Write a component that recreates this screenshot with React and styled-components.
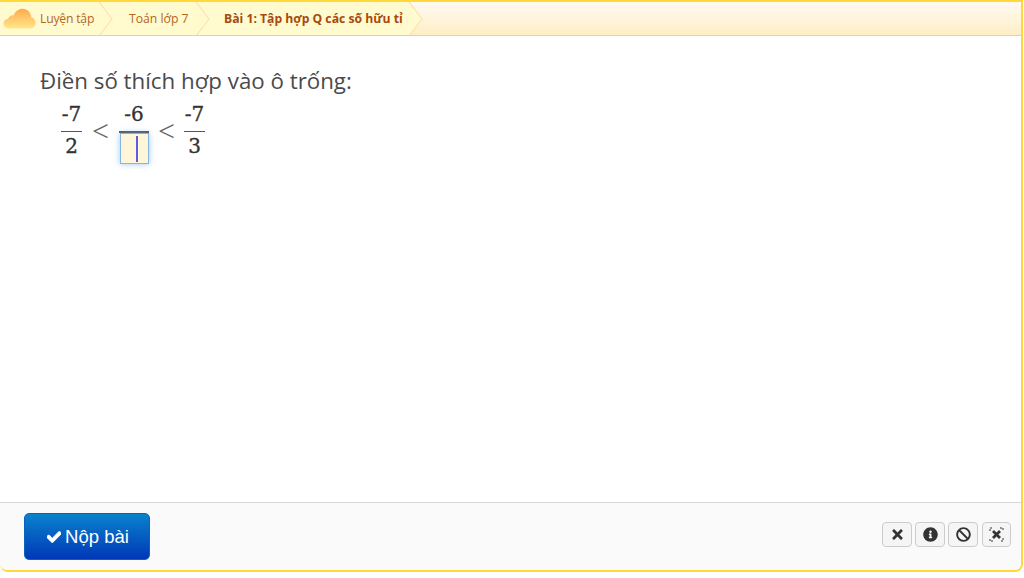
import React from 'react';
import styled, { createGlobalStyle } from 'styled-components';
import { FaCheck, FaTimes, FaInfoCircle, FaBan } from 'react-icons/fa';

const GlobalStyle = createGlobalStyle`
html, body { margin: 0; padding: 0; background: #fff; }
body { font-family: "Open Sans", "Noto Sans", sans-serif; }
`;

const Frame = styled.div`
box-sizing: border-box;
width: 1023px;
height: 572px;
border-style: solid;
border-color: #ffd83a;
border-width: 2px 2px 2px 0;
border-radius: 0 0 8px 8px;
display: flex;
flex-direction: column;
overflow: hidden;
`;

const Crumbs = styled.div`
flex: 0 0 33px;
display: flex;
align-items: stretch;
background: linear-gradient(to bottom, #fffaf0, #fff4d8 60%, #fdeec4);
border-bottom: 1px solid #ffd83a;
overflow: hidden;
`;

const Crumb = styled.div`
position: relative;
display: flex;
align-items: center;
gap: 5px;
width: ${props => props.width}px;
box-sizing: border-box;
padding-left: ${props => props.pad}px;
background: #fffbcf;
font-size: 12.2px;
font-weight: ${props => (props.active ? 700 : 400)};
color: ${props => (props.active ? '#a8490f' : '#b5651d')};
white-space: nowrap;
z-index: ${props => props.layer};

&::after {
  content: '';
  position: absolute;
  top: 5px;
  right: -12px;
  width: 23px;
  height: 23px;
  background: #fffbcf;
  border-top: 1px solid #fddcb0;
  border-right: 1px solid #fddcb0;
  transform: rotate(45deg) skew(8deg, 8deg);
}
`;

const CrumbLabel = styled.span`
position: relative;
z-index: 1;
letter-spacing: ${props => props.spacing || 0}px;
`;

const Cloud = styled.svg`
width: 33px;
height: 21px;
flex: none;
margin-right: -1px;
`;

const Content = styled.div`
flex: 1;
padding: 30px 0 0 40px;
background: #fff;
`;

const Question = styled.div`
font-size: 22.3px;
line-height: 30px;
color: #4a4a4a;
`;

const MathRow = styled.div`
display: flex;
align-items: flex-start;
margin: 6px 0 0 21px;
font-family: "DejaVu Serif", serif;
color: #333;
`;

const Fraction = styled.div`
display: flex;
flex-direction: column;
align-items: center;
width: ${props => props.width}px;
`;

const Top = styled.div`
height: 29px;
line-height: 25px;
font-size: 20px;
-webkit-text-stroke: 0.35px #333;
`;

const Bottom = styled(Top)`
height: 30px;
line-height: 28px;
align-self: stretch;
text-align: center;
border-top: 1.5px solid #555;
`;

const Less = styled.div`
width: ${props => props.width}px;
text-align: center;
font-family: "Liberation Serif", serif;
font-size: 30px;
line-height: 30px;
margin-top: 14px;
color: #666;
`;

const AnswerCol = styled.div`
display: flex;
flex-direction: column;
align-items: center;
width: 30px;
`;

const AnswerRule = styled.div`
align-self: stretch;
height: 2px;
background: #555;
`;

const AnswerBox = styled.div`
box-sizing: border-box;
width: 29px;
height: 31px;
display: flex;
align-items: center;
justify-content: center;
background: #fff5d8;
border: 1px solid #80b6e4;
box-shadow: 0 0 6px rgba(90, 160, 235, 0.6);
`;

const Caret = styled.div`
width: 2px;
height: 26px;
margin-left: 6px;
background: #5d5fe0;
`;

const Footer = styled.div`
flex: 0 0 67px;
display: flex;
align-items: center;
justify-content: space-between;
padding: 0 10px 0 24px;
background: #fafafa;
border-top: 1px solid #d8d8d8;
`;

const Submit = styled.button`
width: 126px;
height: 47px;
display: flex;
align-items: center;
justify-content: center;
gap: 4px;
padding: 0 0 0 2px;
border: 1px solid #0a62bd;
border-radius: 5px;
background: linear-gradient(to bottom, #0a82cc, #0038b8);
color: #fff;
font-family: "Liberation Sans", Arial, sans-serif;
font-size: 18.5px;
`;

const CheckIcon = styled(FaCheck)`
stroke: #fff;
stroke-width: 40;
`;

const Tools = styled.div`
display: flex;
gap: 3px;
margin-top: -5px;
`;

const ToolButton = styled.button`
width: ${props => props.width || 30}px;
margin-left: ${props => props.shift || 0}px;
height: 25px;
display: flex;
align-items: center;
justify-content: center;
padding: 0;
border: 1px solid #ccc;
border-radius: 4px;
background: #f5f5f5;
color: #333;
font-size: 15px;
`;

function ExpandIcon() {
  return (
    <svg width="15" height="15" viewBox="0 0 15 15" fill="none" stroke="#333">
      <path d="M1 4V1h3M11 1h3v3M14 11v3h-3M4 14H1v-3" strokeDasharray="2 1" />
      <path d="M4 4l7 7M11 4l-7 7" strokeWidth="2.8" />
    </svg>
  );
}

export default function App() {
  return (
    <Frame>
      <GlobalStyle />
      <Crumbs>
        <Crumb width={98} pad={3} layer={3}>
          <Cloud viewBox="0 0 33 21">
            <defs>
              <linearGradient id="cloudFill" x1="0" y1="0" x2="0" y2="1">
                <stop offset="0" stopColor="#ffa94f" />
                <stop offset="1" stopColor="#ffe88a" />
              </linearGradient>
            </defs>
            <path
              d="M6 20.5C2.500 20.500.500 18.300.500 15.600c0-2.600 2-4.600 4.600-4.800C6.200 8.300 8.400 7 10.500 7.400 12.300 3.300 15.600.800 19.600.800c5 0 8.400 3.700 8.600 8.400 2.700.6 4.300 3 4.300 5.700 0 3.200-2.300 5.600-5.600 5.600Z"
              fill="url(#cloudFill)"
            />
          </Cloud>
          <CrumbLabel spacing={-0.2}>Luyện tập</CrumbLabel>
        </Crumb>
        <Crumb width={97} pad={31} layer={2}>
          <CrumbLabel>Toán lớp 7</CrumbLabel>
        </Crumb>
        <Crumb width={213} pad={29} active layer={1}>
          <CrumbLabel>Bài 1: Tập hợp Q các số hữu tỉ</CrumbLabel>
        </Crumb>
      </Crumbs>
      <Content>
        <Question>Điền số thích hợp vào ô trống:</Question>
        <MathRow>
          <Fraction width={21}>
            <Top>-7</Top>
            <Bottom>2</Bottom>
          </Fraction>
          <Less width={37}>&lt;</Less>
          <AnswerCol>
            <Top>-6</Top>
            <AnswerRule />
            <AnswerBox>
              <Caret />
            </AnswerBox>
          </AnswerCol>
          <Less width={35}>&lt;</Less>
          <Fraction width={21}>
            <Top>-7</Top>
            <Bottom>3</Bottom>
          </Fraction>
        </MathRow>
      </Content>
      <Footer>
        <Submit>
          <CheckIcon size={14} />
          Nộp bài
        </Submit>
        <Tools>
          <ToolButton><FaTimes /></ToolButton>
          <ToolButton><FaInfoCircle /></ToolButton>
          <ToolButton><FaBan /></ToolButton>
          <ToolButton width={29} shift={1}><ExpandIcon /></ToolButton>
        </Tools>
      </Footer>
    </Frame>
  );
}
